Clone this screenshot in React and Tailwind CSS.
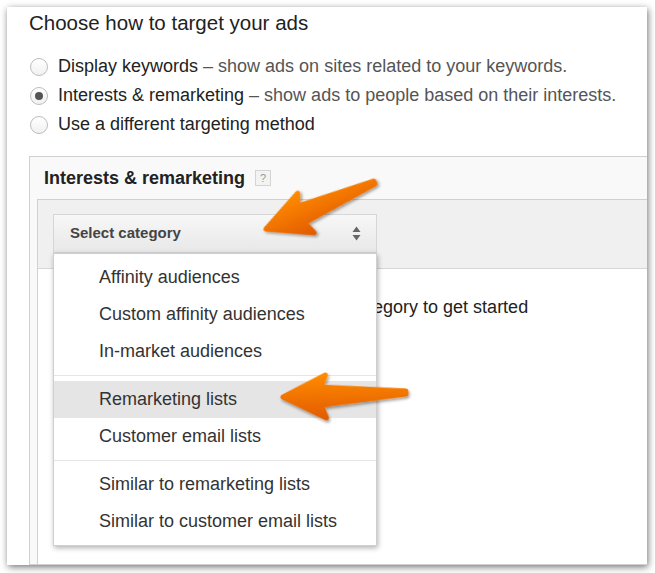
import React from 'react'

const font = { fontFamily: '"Liberation Sans", Arial, sans-serif' }

function Radio({ checked }) {
  return (
    <span className="flex h-[18px] w-[18px] shrink-0 items-center justify-center rounded-full border border-[#bdbdbd] bg-gradient-to-b from-white to-[#f1f1f1]">
      {checked && <span className="h-[8px] w-[8px] rounded-full bg-[#555]" />}
    </span>
  )
}

function Option({ checked, label, desc }) {
  return (
    <div className="flex h-[29px] items-center gap-[10px] pl-[1px]">
      <Radio checked={checked} />
      <span className="text-[18px] text-[#222]">
        {label}
        {desc && <span className="text-[#555]"> – {desc}</span>}
      </span>
    </div>
  )
}

function Item({ label, active }) {
  return (
    <div className={'flex h-[37px] items-center pl-[45px] text-[18px] text-[#333] ' + (active ? 'bg-[#e5e5e5]' : '')}>
      {label}
    </div>
  )
}

function Arrow({ x, y, angle, len }) {
  const pts = `0,0 43,-21 38,-9 ${len},-3 ${len},0 38,9 43,22`
  return (
    <g transform={`translate(${x} ${y}) rotate(${angle})`} filter="url(#sh)">
      <polygon points={pts} fill="url(#og)" stroke="url(#og)" strokeWidth="5" strokeLinejoin="round" />
    </g>
  )
}

export default function App() {
  return (
    <div className="relative h-[573px] w-[655px] overflow-hidden bg-white pl-[7px] pt-[7px]" style={font}>
      <div className="flex h-[558px] w-[640px] flex-col overflow-hidden bg-white pl-[22px] pt-[5px] shadow-[1px_2px_7px_rgba(0,0,0,0.55)]">
        <h1 className="text-[20.5px] leading-[22px] text-[#222]">Choose how to target your ads</h1>

        <div className="mt-[18px] flex flex-col">
          <Option label="Display keywords" desc="show ads on sites related to your keywords." />
          <Option checked label="Interests & remarketing" desc="show ads to people based on their interests." />
          <Option label="Use a different targeting method" />
        </div>

        {/* panel */}
        <div className="mt-[17px] flex w-[700px] flex-1 flex-col border border-[#d0d0d0] bg-[#f9f9f9]">
          <div className="flex h-[42px] shrink-0 items-center gap-[10px] pl-[14px]">
            <span className="text-[18px] font-bold text-[#222]">Interests &amp; remarketing</span>
            <span className="flex h-[16px] w-[16px] items-center justify-center border border-[#d4d4d4] bg-[#f3f3f3] text-[11px] leading-none text-[#999]">?</span>
          </div>
          <div className="ml-[7px] flex flex-1 flex-col border-l border-t border-[#d0d0d0] bg-white">
            <div className="h-[69px] shrink-0 border-b border-[#d6d6d6] bg-[#f0f0f0] pl-[15px] pt-[14px]">
              <div className="relative w-[324px]">
                <div className="flex h-[39px] items-center justify-between border border-[#d6d6d6] bg-gradient-to-b from-[#f7f7f7] to-[#e8e8e8] pl-[16px] pr-[15px]">
                  <span className="text-[15px] font-bold text-[#444]">Select category</span>
                  <svg width="9" height="15" viewBox="0 0 9 15">
                    <path d="M4.5 0.5 L8.5 6 L0.5 6 Z" fill="#666" />
                    <path d="M4.5 14.5 L8.5 9 L0.5 9 Z" fill="#666" />
                  </svg>
                </div>
                {/* dropdown */}
                <div className="absolute left-0 top-full z-10 w-[324px] border border-[#cfcfcf] bg-white py-[5px] shadow-[1px_2px_5px_rgba(0,0,0,0.3)]">
                  <Item label="Affinity audiences" />
                  <Item label="Custom affinity audiences" />
                  <Item label="In-market audiences" />
                  <div className="my-[5px] h-px bg-[#e6e6e6]" />
                  <Item active label="Remarketing lists" />
                  <Item label="Customer email lists" />
                  <div className="my-[5px] h-px bg-[#e6e6e6]" />
                  <Item label="Similar to remarketing lists" />
                  <Item label="Similar to customer email lists" />
                </div>
              </div>
            </div>
            <div className="pl-[241px] pt-[28px] text-[18px] leading-[20px] text-[#222]">
              Select a category to get started
            </div>
          </div>
        </div>
      </div>

      <svg className="pointer-events-none absolute left-0 top-0 z-20" width="655" height="573">
        <defs>
          <linearGradient id="og" x1="0" y1="0" x2="0" y2="1">
            <stop offset="0" stopColor="#ff8a00" />
            <stop offset="1" stopColor="#e25c00" />
          </linearGradient>
          <filter id="sh" x="-20%" y="-40%" width="140%" height="180%">
            <feDropShadow dx="1" dy="2" stdDeviation="1.5" floodColor="#000" floodOpacity="0.4" />
          </filter>
        </defs>
        <Arrow x={266} y={229} angle={-22.5} len={118} />
        <Arrow x={283} y={397} angle={-1.4} len={123} />
      </svg>
    </div>
  )
}
